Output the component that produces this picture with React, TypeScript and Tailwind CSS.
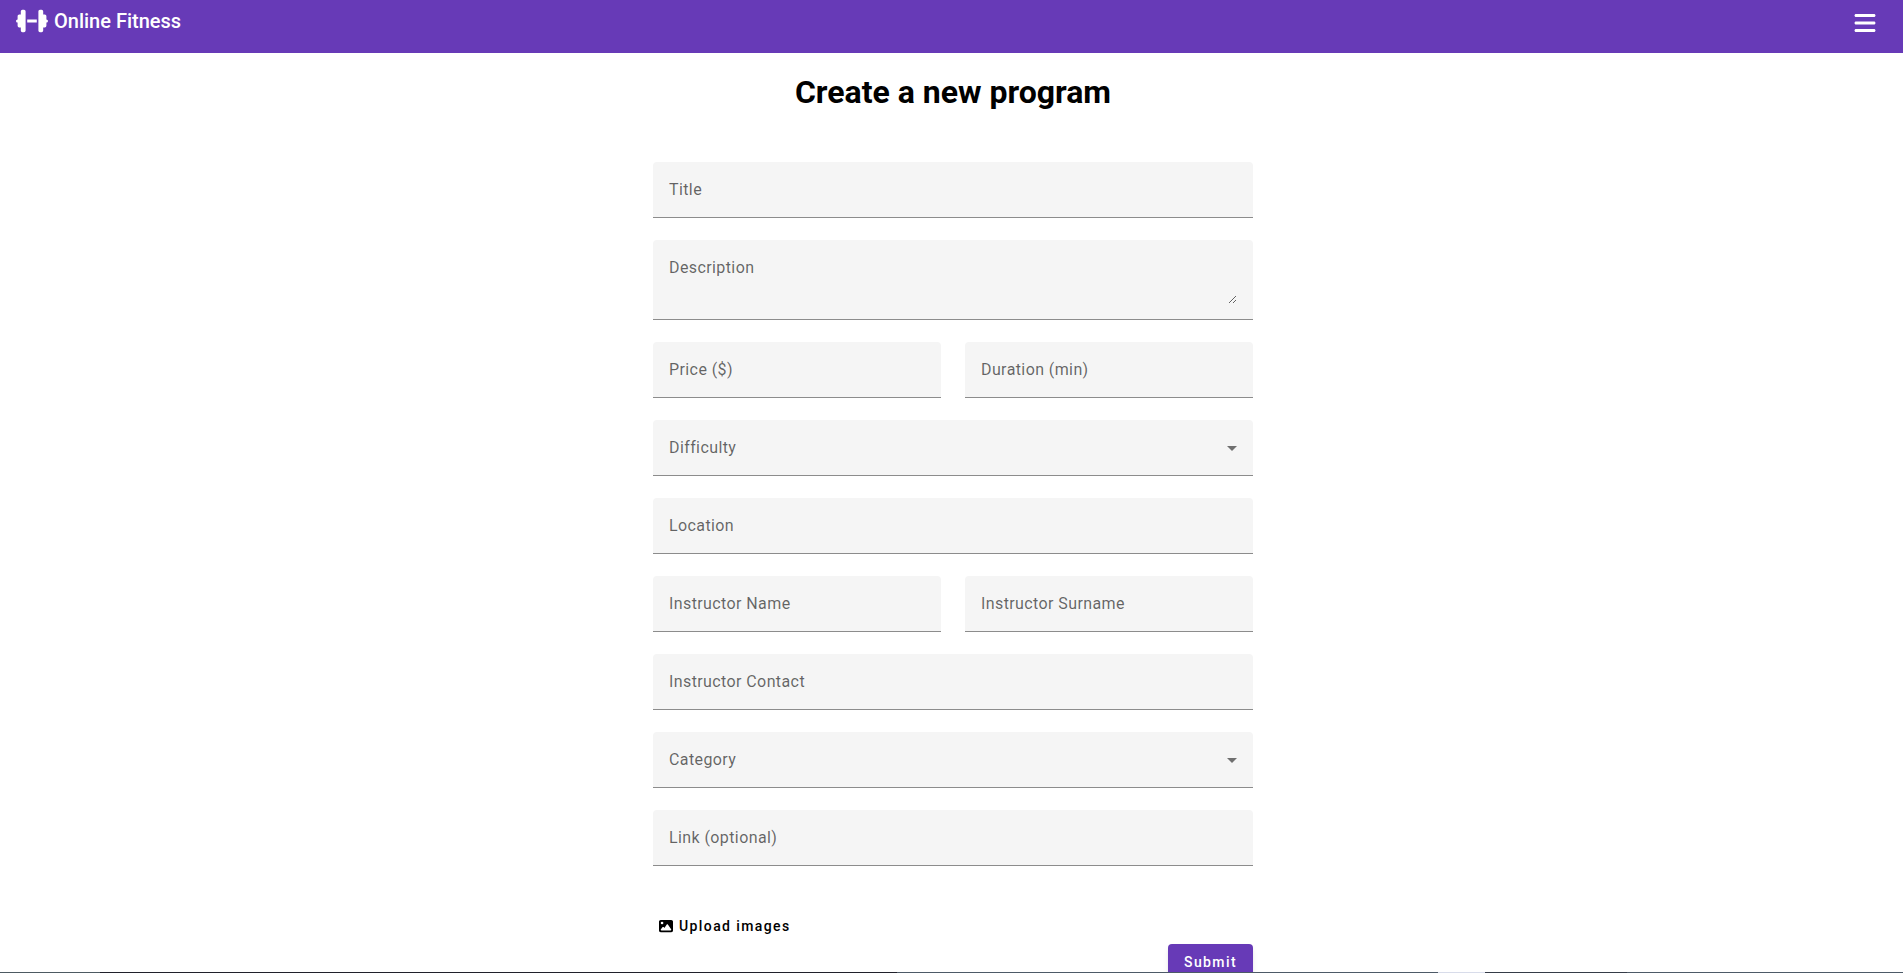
import React, { useState } from "react";
import { FaBars, FaDumbbell, FaImage } from "react-icons/fa6";

const box =
  "block w-full appearance-none rounded-t border-b border-[#8c8c8c] bg-[#f5f5f5] px-4 text-base text-black/85 outline-none focus:border-[#673ab7]";
const labelText =
  "pointer-events-none absolute left-4 top-4 text-base leading-6 tracking-wide text-black/60";

type FieldProps = { id: string; label: string; type?: string };

function TextField({ id, label, type = "text" }: FieldProps) {
  const [value, setValue] = useState("");
  return (
    <div className="relative flex-1">
      <input
        id={id}
        type={type}
        value={value}
        onChange={(e) => setValue(e.target.value)}
        className={`${box} h-14`}
      />
      <label htmlFor={id} className={value ? "sr-only" : labelText}>
        {label}
      </label>
    </div>
  );
}

function AreaField({ id, label }: FieldProps) {
  const [value, setValue] = useState("");
  return (
    <div className="relative rounded-t border-b border-[#8c8c8c] bg-[#f5f5f5] px-4 pt-6 pb-[15px]">
      <textarea
        id={id}
        value={value}
        onChange={(e) => setValue(e.target.value)}
        className="block h-10 w-full resize-y bg-transparent text-base text-black/85 outline-none"
      />
      <label htmlFor={id} className={value ? "sr-only" : labelText}>
        {label}
      </label>
    </div>
  );
}

function SelectField({ id, label, options }: FieldProps & { options: string[] }) {
  const [value, setValue] = useState("");
  return (
    <div className="relative">
      <select
        id={id}
        value={value}
        onChange={(e) => setValue(e.target.value)}
        className={`${box} h-14`}
      >
        <option value="" />
        {options.map((o) => (
          <option key={o}>{o}</option>
        ))}
      </select>
      <label htmlFor={id} className={value ? "sr-only" : labelText}>
        {label}
      </label>
      <svg
        viewBox="0 0 10 5"
        className="pointer-events-none absolute top-[26px] right-4 h-[5px] w-[10px] fill-black/55"
        aria-hidden="true"
      >
        <path d="M0 0h10L5 5z" />
      </svg>
    </div>
  );
}

export default function App() {
  return (
    <div className="bg-white font-['Roboto',sans-serif] text-black">
      <header className="flex h-[53px] items-start justify-between bg-[#673ab7] px-4 text-white">
        <a href="#" className="flex h-[42px] items-center gap-1.5 text-xl font-medium">
          <FaDumbbell className="h-8 w-8" aria-hidden="true" />
          Online Fitness
        </a>
        <button type="button" aria-label="Menu" className="flex h-[46px] items-center px-2.5">
          <FaBars className="h-6 w-6" />
        </button>
      </header>

      <div className="pl-[3px]">
        <main className="mx-auto max-w-[600px]">
          <h1 className="pt-[19px] text-center text-[32px] leading-10 font-bold">
            Create a new program
          </h1>
          <form className="mt-[50px] flex flex-col gap-[22px]" onSubmit={(e) => e.preventDefault()}>
            <TextField id="title" label="Title" />
            <AreaField id="description" label="Description" />
            <div className="flex gap-6">
              <TextField id="price" label="Price ($)" />
              <TextField id="duration" label="Duration (min)" />
            </div>
            <SelectField id="difficulty" label="Difficulty" options={[]} />
            <TextField id="location" label="Location" />
            <div className="flex gap-6">
              <TextField id="name" label="Instructor Name" />
              <TextField id="surname" label="Instructor Surname" />
            </div>
            <TextField id="contact" label="Instructor Contact" />
            <SelectField id="category" label="Category" options={[]} />
            <TextField id="link" label="Link (optional)" />
            <div className="flex flex-col pt-5">
              <button
                type="button"
                className="flex h-9 items-center gap-1.5 self-start px-1.5 text-sm font-medium tracking-widest"
              >
                <FaImage className="h-3.5 w-3.5" aria-hidden="true" />
                Upload images
              </button>
              <button
                type="submit"
                className="h-9 self-end rounded bg-[#673ab7] px-4 text-sm font-medium tracking-widest text-white shadow-md"
              >
                Submit
              </button>
            </div>
          </form>
        </main>
      </div>

      <div className="fixed inset-x-0 bottom-0 flex h-px" aria-hidden="true">
        <span className="w-[100px] bg-[#4d5a62]" />
        <span className="w-[797px] bg-[#20212b]" />
        <span className="w-[541px] bg-[#4d5a67]" />
        <span className="w-[47px] bg-[#d8dcea]" />
        <span className="w-[142px] bg-[#353c48]" />
        <span className="flex-1 bg-[#4d5a67]" />
      </div>
    </div>
  );
}
